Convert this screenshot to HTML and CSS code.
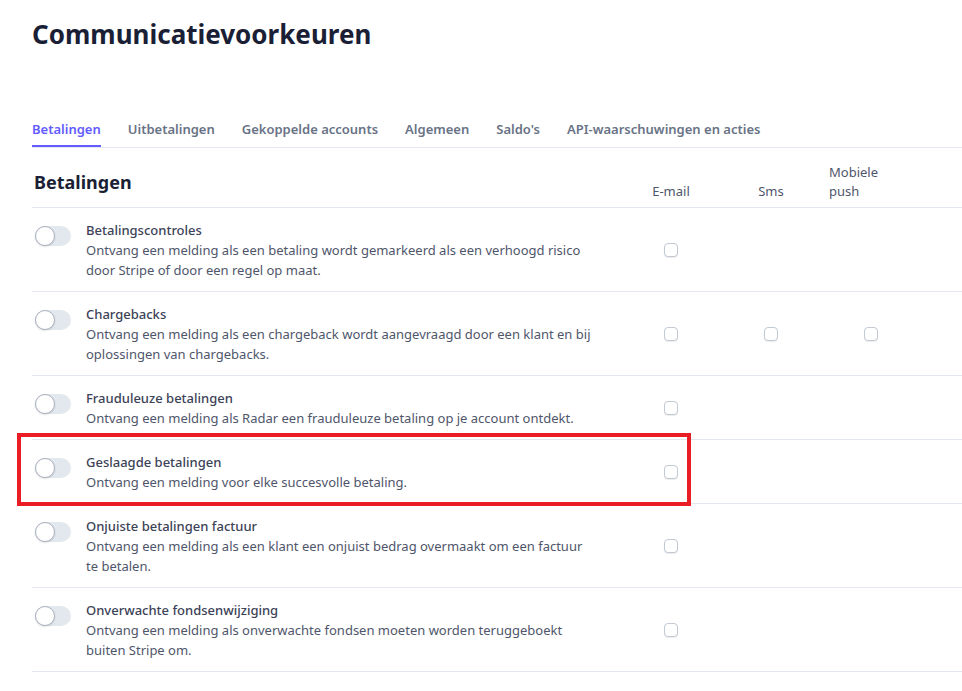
FILE: index.html
```html
<!DOCTYPE html>
<html lang="nl">
<head>
  <meta charset="UTF-8">
  <meta name="viewport" content="width=device-width, initial-scale=1.0">
  <title>Communicatievoorkeuren</title>
  <link rel="stylesheet" href="styles.css">
</head>
<body>
  <div class="page">
    <h1>Communicatievoorkeuren</h1>

    <!-- Tabs -->
    <div class="tabs">
      <a class="tab active">Betalingen</a>
      <a class="tab">Uitbetalingen</a>
      <a class="tab">Gekoppelde accounts</a>
      <a class="tab">Algemeen</a>
      <a class="tab">Saldo's</a>
      <a class="tab">API-waarschuwingen en acties</a>
    </div>

    <!-- Preferences table -->
    <div class="prefs">
      <div class="head">
        <h2>Betalingen</h2>
        <div class="col-head">E-mail</div>
        <div class="col-head">Sms</div>
        <div class="col-head left">Mobiele<br>push</div>
      </div>

      <div class="row">
        <div class="info">
          <span class="toggle"></span>
          <div class="text">
            <div class="name">Betalingscontroles</div>
            <div class="desc">Ontvang een melding als een betaling wordt gemarkeerd als een verhoogd risico door Stripe of door een regel op maat.</div>
          </div>
        </div>
        <div class="cell"><input type="checkbox"></div>
        <div class="cell"></div>
        <div class="cell"></div>
      </div>

      <div class="row">
        <div class="info">
          <span class="toggle"></span>
          <div class="text">
            <div class="name">Chargebacks</div>
            <div class="desc">Ontvang een melding als een chargeback wordt aangevraagd door een klant en bij oplossingen van chargebacks.</div>
          </div>
        </div>
        <div class="cell"><input type="checkbox"></div>
        <div class="cell"><input type="checkbox"></div>
        <div class="cell"><input type="checkbox"></div>
      </div>

      <div class="row">
        <div class="info">
          <span class="toggle"></span>
          <div class="text">
            <div class="name">Frauduleuze betalingen</div>
            <div class="desc">Ontvang een melding als Radar een frauduleuze betaling op je account ontdekt.</div>
          </div>
        </div>
        <div class="cell"><input type="checkbox"></div>
        <div class="cell"></div>
        <div class="cell"></div>
      </div>

      <div class="row">
        <div class="info">
          <span class="toggle"></span>
          <div class="text">
            <div class="name">Geslaagde betalingen</div>
            <div class="desc">Ontvang een melding voor elke succesvolle betaling.</div>
          </div>
          <div class="highlight"></div>
        </div>
        <div class="cell"><input type="checkbox"></div>
        <div class="cell"></div>
        <div class="cell"></div>
      </div>

      <div class="row">
        <div class="info">
          <span class="toggle"></span>
          <div class="text">
            <div class="name">Onjuiste betalingen factuur</div>
            <div class="desc">Ontvang een melding als een klant een onjuist bedrag overmaakt om een factuur te betalen.</div>
          </div>
        </div>
        <div class="cell"><input type="checkbox"></div>
        <div class="cell"></div>
        <div class="cell"></div>
      </div>

      <div class="row">
        <div class="info">
          <span class="toggle"></span>
          <div class="text">
            <div class="name">Onverwachte fondsenwijziging</div>
            <div class="desc">Ontvang een melding als onverwachte fondsen moeten worden teruggeboekt buiten Stripe om.</div>
          </div>
        </div>
        <div class="cell"><input type="checkbox"></div>
        <div class="cell"></div>
        <div class="cell"></div>
      </div>
    </div>
  </div>
</body>
</html>
```

FILE: styles.css
```css
body {
  margin: 0;
  font-family: "Noto Sans", "Open Sans", sans-serif;
  color: #3c4257;
  background: #fff;
  overflow: hidden;
}
.page {
  padding-left: 32px;
}
h1 {
  margin: 16px 0 67px;
  font-size: 26px;
  line-height: 36px;
  font-weight: 700;
  color: #1a1f36;
}

/* tabs */
.tabs {
  display: flex;
  gap: 27px;
  border-bottom: 1px solid #e3e8ee;
}
.tab {
  font-size: 13px;
  line-height: 20px;
  font-weight: 600;
  color: #697386;
  padding-bottom: 6px;
  border-bottom: 2px solid transparent;
}
.tab.active {
  color: #635bff;
  border-bottom-color: #635bff;
}

/* table */
.prefs {
  display: grid;
  grid-template-columns: 1fr 100px 100px 100px 41px;
}
.head,
.row {
  display: contents;
}
.head > * {
  border-bottom: 1px solid #e3e8ee;
  height: 60px;
  box-sizing: border-box;
}
.head::after,
.row::after {
  content: "";
  border-bottom: 1px solid #e3e8ee;
}
h2 {
  margin: 0;
  padding: 20px 0 0 2px;
  font-size: 18px;
  line-height: 28px;
  font-weight: 700;
  color: #1a1f36;
}
.col-head {
  display: flex;
  align-items: flex-end;
  justify-content: center;
  padding-bottom: 6px;
  font-size: 13px;
  line-height: 19px;
  color: #4f566b;
}
.col-head.left {
  justify-content: flex-start;
  padding-left: 8px;
}
.row > .info,
.row > .cell {
  border-bottom: 1px solid #e3e8ee;
}
.info {
  position: relative;
  display: flex;
  gap: 15px;
  padding: 12px 0 11px 3px;
}
.cell {
  display: flex;
  align-items: center;
  justify-content: center;
}
.text {
  max-width: 508px;
  font-size: 13px;
  line-height: 20px;
}
.name {
  font-weight: 500;
  color: #3c4257;
}
.desc {
  color: #4f566b;
}

/* toggle switch */
.toggle {
  position: relative;
  flex: none;
  width: 36px;
  height: 20px;
  margin-top: 6px;
  border-radius: 10px;
  background: #e3e8ee;
}
.toggle::before {
  content: "";
  position: absolute;
  left: 0;
  top: 0;
  width: 18px;
  height: 18px;
  border-radius: 50%;
  background: #fff;
  border: 1px solid #aab2bd;
  box-shadow: 0 1px 2px rgba(0, 0, 0, 0.12);
}

/* checkbox */
input[type="checkbox"] {
  appearance: none;
  margin: 0;
  width: 14px;
  height: 14px;
  border: 1px solid #c1c9d2;
  border-radius: 4px;
  background: #fff;
  box-shadow: 0 1px 1px rgba(0, 0, 0, 0.08);
}

/* red marker round one row */
.highlight {
  position: absolute;
  left: -15px;
  top: -7px;
  width: 674px;
  height: 73px;
  box-sizing: border-box;
  border: 4px solid #ea1d25;
  pointer-events: none;
}
```
